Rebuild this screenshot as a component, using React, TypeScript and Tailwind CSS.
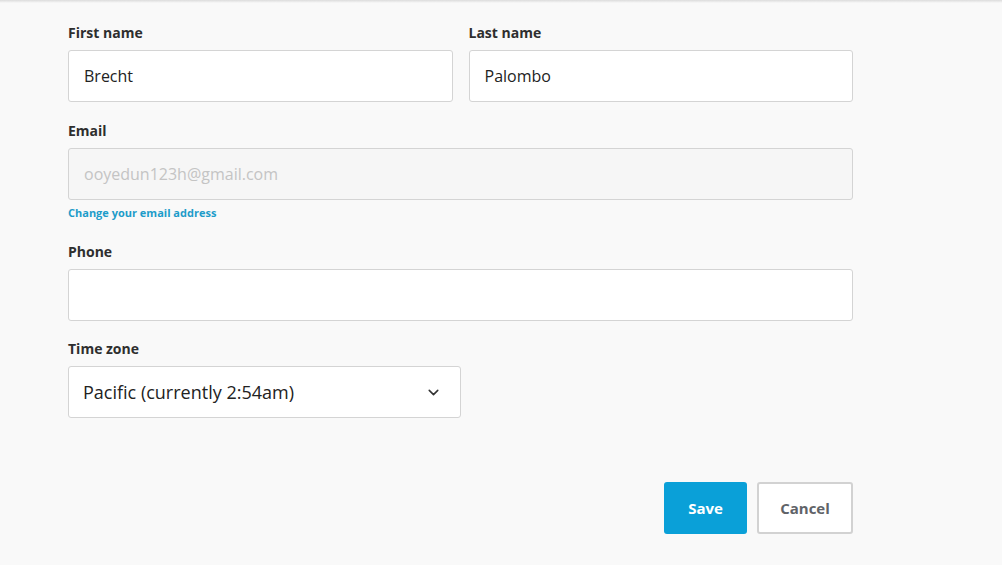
import { ChevronDown } from 'lucide-react'

const font = { fontFamily: '"Open Sans", "Noto Sans", sans-serif' }

function Label({ children }: { children: React.ReactNode }) {
  return <div className="h-5 text-[14px] font-bold leading-5 text-[#2e2e2e]">{children}</div>
}

function Field({ value, disabled }: { value?: string; disabled?: boolean }) {
  return (
    <div
      className={
        'mt-[7px] flex h-[52px] items-center rounded-[3px] border border-[#d4d4d4] px-[15px] text-[16px] ' +
        (disabled ? 'bg-[#f6f6f6] text-[#c4c4c4]' : 'bg-white text-[#222]')
      }
    >
      {value}
    </div>
  )
}

export default function App() {
  return (
    <div className="min-h-screen w-full bg-[#f9f9f9]" style={font}>
      <div className="h-[3px] bg-gradient-to-b from-[#dcdcdc] to-[#f9f9f9]" />
      <div className="ml-[68px] w-[785px] pt-5">
        <div className="grid grid-cols-2 gap-x-[16px]">
          <div>
            <Label>First name</Label>
            <Field value="Brecht" />
          </div>
          <div>
            <Label>Last name</Label>
            <Field value="Palombo" />
          </div>
        </div>

        <div className="mt-[19px]">
          <Label>Email</Label>
          <Field value="ooyedun123h@gmail.com" disabled />
          <div className="mt-[6px] text-[11px] font-bold leading-[14px] text-[#1d9cc9]">Change your email address</div>
        </div>

        <div className="mt-[22px]">
          <Label>Phone</Label>
          <Field />
        </div>

        <div className="mt-[18px] w-[393px]">
          <Label>Time zone</Label>
          <div className="mt-[7px] flex h-[52px] items-center justify-between rounded-[3px] border border-[#d4d4d4] bg-white pl-[14px] pr-[18px] text-[18px] text-[#222]">
            <span>Pacific (currently 2:54am)</span>
            <ChevronDown size={17} strokeWidth={2.2} className="text-[#333]" />
          </div>
        </div>

        <div className="mt-[64px] flex justify-end gap-[10px]">
          <button className="h-[52px] w-[83px] rounded-[3px] bg-[#0aa0d8] text-[15px] font-bold text-white">Save</button>
          <button className="h-[52px] w-[96px] rounded-[3px] border-2 border-[#d2d2d2] bg-white text-[15px] font-bold text-[#5f6368]">Cancel</button>
        </div>
      </div>
    </div>
  )
}
